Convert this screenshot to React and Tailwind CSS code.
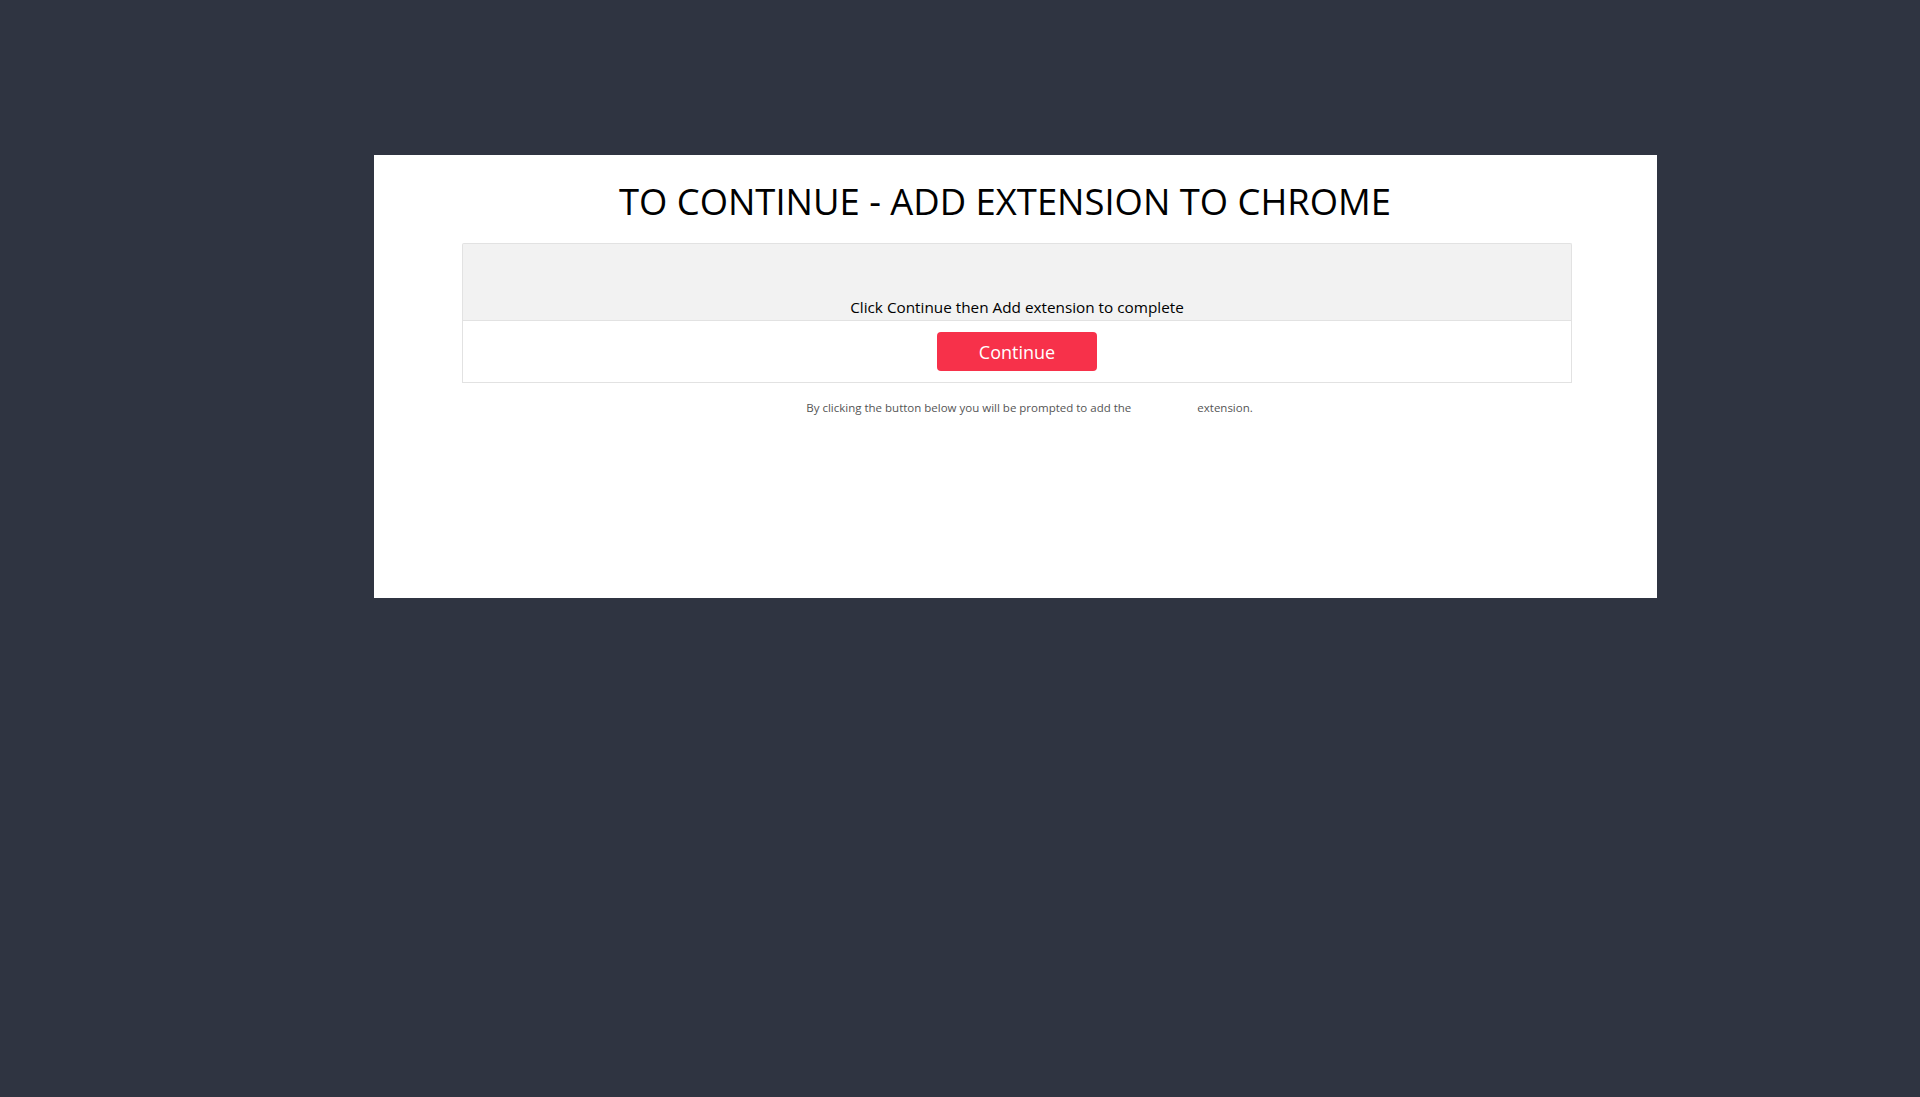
import React from "react";

export default function App() {
  return (
    <div className="min-h-screen bg-[#2f3441] pt-[155px]" style={{ fontFamily: '"Open Sans", "Noto Sans", sans-serif' }}>
      <div className="ml-[374px] w-[1283px] h-[443px] bg-white">
        {/* titulo */}
        <h1 className="pt-[21px] pr-[21px] text-center text-[36.4px] leading-[50px] font-normal text-black">
          TO CONTINUE - ADD EXTENSION TO CHROME
        </h1>

        <div className="ml-[88px] mt-[17px] w-[1110px]">
          <div className="h-[77px] flex items-end justify-center pb-[2px] bg-[#f2f2f2] border border-[#e2e2e2] border-b-0 rounded-t-[2px]">
            <p className="text-[15.3px] leading-[21px] text-black">Click Continue then Add extension to complete</p>
          </div>
          <div className="h-[63px] flex justify-center pt-[11px] border border-[#e2e2e2]">
            <button
              type="button"
              className="w-[160px] h-[39px] rounded-[4px] bg-[#f7314a] text-white text-[18px] leading-[24px]"
            >
              Continue
            </button>
          </div>
        </div>

        <p className="mt-[17px] pl-[28px] text-center text-[11.5px] leading-[16px] text-[#555]">
          By clicking the button below you will be prompted to add the{" "}
          <span className="inline-block w-[60px]"></span> extension.
        </p>
      </div>
    </div>
  );
}
